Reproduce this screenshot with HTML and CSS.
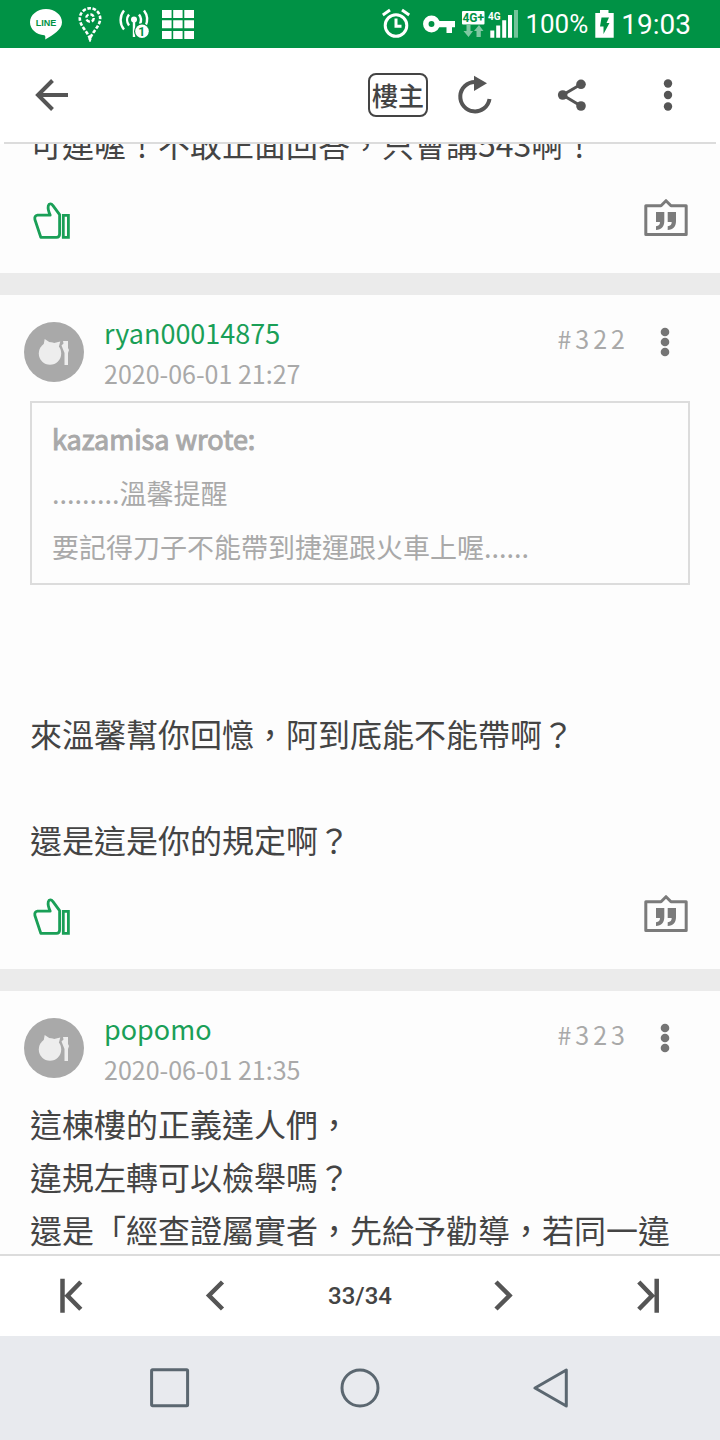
FILE: index.html
```html
<!DOCTYPE html>
<html lang="zh-Hant">
<head>
    <meta charset="UTF-8">
    <meta name="viewport" content="width=device-width, initial-scale=1.0">
    <title>33/34</title>
    <link rel="stylesheet" href="styles.css">
</head>
<body>
    <!-- Shared icons -->
    <svg class="sprite" aria-hidden="true">
        <symbol id="icon-like" viewBox="0 0 44 44">
            <g fill="none" stroke="#1a9f57" stroke-width="2.8" stroke-linejoin="round">
                <path d="M5.5 19.2H18.2C16.5 15.5 15.8 12 16.3 9.8C16.9 7.4 19.5 7.4 20.8 9.4L27.6 18.7V38Q27.6 41.3 24.5 41.3H8.8L2.9 23.5Q2.2 19.6 5.5 19.2Z"/>
                <path d="M31.3 19.3H36.4V41.3H31.3Z" stroke-linejoin="miter"/>
            </g>
        </symbol>
        <symbol id="icon-quote" viewBox="0 0 44 44">
            <path d="M1.8 9.7H17L22 4.7L27 9.7H42.2V38.5H1.8Z" fill="none" stroke="#7b7b7b" stroke-width="3" stroke-linejoin="round"/>
            <path d="M12 16H20.3V25C20.3 31 17.5 33.5 12 34V30.3C14.8 29.8 16 28.5 16 26H12ZM23.7 16H32V25C32 31 29.2 33.5 23.7 34V30.3C26.5 29.8 27.7 28.5 27.7 26H23.7Z" fill="#7b7b7b"/>
        </symbol>
        <symbol id="icon-avatar" viewBox="0 0 60 60">
            <circle cx="30" cy="30" r="30" fill="#a9a9a9"/>
            <g fill="#ededed">
                <circle cx="26" cy="31.5" r="11.2"/>
                <path d="M20.7 17L26 20.5L30 21L36.3 19.5L34.5 26L19 26Z"/>
                <path d="M39 19H44V26L45 28L44 31V43H40.5V31L39.3 28L37.5 23.5L39.5 21.5Z"/>
            </g>
        </symbol>
        <symbol id="icon-dots" viewBox="0 0 40 40">
            <circle cx="20" cy="10" r="4.3"/>
            <circle cx="20" cy="20" r="4.3"/>
            <circle cx="20" cy="30" r="4.3"/>
        </symbol>
    </svg>

    <div class="status-bar">
        <div class="status-left">
            <svg width="34" height="36" viewBox="0 0 34 36">
                <path d="M16 3C24.8 3 32 9 32 16.2C32 23.5 23 29 15.2 33.5C15.5 31.5 15.5 30 14.5 29.3C6 28.5 0 23 0 16.2C0 9 7.2 3 16 3Z" fill="#fff"/>
                <text x="16" y="20" class="line-text" text-anchor="middle">LINE</text>
            </svg>
            <svg width="26" height="36" viewBox="0 0 26 36" fill="none" stroke="#fff">
                <path d="M12 33C10 26 1.8 20 1.8 12.5A10.2 10.2 0 0 1 22.2 12.5C22.2 20 14 26 12 33Z" stroke-width="2.6" stroke-dasharray="3.6 1.6"/>
                <circle cx="12" cy="12" r="3.8" stroke-width="2.4" stroke-dasharray="4 1.97"/>
                <circle cx="12" cy="33" r="1.5" fill="#fff" stroke="none"/>
            </svg>
            <svg class="hotspot" width="30" height="36" viewBox="0 0 30 36">
                <g fill="none" stroke="#fff" stroke-width="2.4">
                    <path d="M6 4.5A15 15 0 0 0 6 23.500M11 8.500A9 9 0 0 0 11 19.500M21 8.500A9 9 0 0 1 22 18M26 4.500A15 15 0 0 1 27.500 20"/>
                    <path d="M16 14V31"/>
                </g>
                <circle cx="16" cy="13.5" r="3" fill="#fff"/>
                <circle cx="24" cy="25.3" r="8" fill="#009245"/>
                <circle cx="24" cy="25.3" r="6.8" fill="#fff"/>
                <text x="23.8" y="29.6" class="badge-text" text-anchor="middle">1</text>
            </svg>
            <svg width="32" height="36" viewBox="0 0 32 36" fill="#fff">
                <path d="M0 4H9.6V12H0ZM11.2 4H20.6V12H11.2ZM22.3 4H32V12H22.3ZM0 14.3H9.6V22.3H0ZM11.2 14.3H20.6V22.3H11.2ZM22.3 14.3H32V22.3H22.3ZM0 24.9H9.6V32.9H0ZM11.2 24.9H20.6V32.9H11.2ZM22.3 24.9H32V32.9H22.3Z"/>
            </svg>
        </div>
        <div class="status-right">
            <svg width="34" height="36" viewBox="0 0 34 36" fill="none" stroke="#fff" stroke-width="3">
                <circle cx="14" cy="19.5" r="10.8"/>
                <path d="M14 12.5V20.3H19.5"/>
                <path d="M.8 9L8 4M20 4L27.2 9"/>
            </svg>
            <svg width="32" height="36" viewBox="0 0 32 36">
                <circle cx="8.500" cy="18" r="5.7" fill="none" stroke="#fff" stroke-width="5.5"/>
                <path d="M14 15H32V21.2H29V27H23.5V21.2H14Z" fill="#fff"/>
            </svg>
            <svg width="56" height="36" viewBox="0 0 56 36" fill="#fff">
                <rect x="0" y="5" width="22.5" height="13.5" rx="1"/>
                <text x="11.2" y="16" class="net-text" text-anchor="middle">4G+</text>
                <path d="M4.5 19H8.5V25H11L6.5 31L1.5 25H4.500ZM14.500 31V25H12L17 19L21.500 25H18.800V31Z" opacity=".5"/>
                <text x="26" y="13.5" class="sig-text">4G</text>
                <path d="M28.3 24.5H32.3V31.7H28.3ZM34.2 19.5H38.2V31.7H34.2ZM40.2 14.2H44.2V31.7H40.2ZM46 9H50V31.7H46Z"/>
                <path d="M52 4H56V31.7H52Z" opacity=".45"/>
            </svg>
            <span class="battery-text">100%</span>
            <svg width="19" height="36" viewBox="0 0 19 36">
                <path d="M5 4H13.5V7H18.7V31.7H.3V7H5Z" fill="#fff"/>
                <path d="M6.5 11.5H14L11.5 17H14.5L8.5 28V20.5H5Z" fill="#009245"/>
            </svg>
            <span class="clock">19:03</span>
        </div>
    </div>

    <header class="toolbar">
        <button class="tool-btn back" aria-label="返回">
            <svg width="36" height="36" viewBox="0 0 36 36" fill="none" stroke="#555" stroke-width="4">
                <path d="M4 18H34M18.5 3.5L4 18L18.5 32.5"/>
            </svg>
        </button>
        <button class="owner-btn">樓主</button>
        <button class="tool-btn" aria-label="重新整理">
            <svg width="40" height="40" viewBox="0 0 40 40">
                <path d="M33.5 24A14.7 14.7 0 1 1 19 7" fill="none" stroke="#555" stroke-width="4"/>
                <path d="M18 .7L31 8.3L18 16Z" fill="#555"/>
            </svg>
        </button>
        <button class="tool-btn" aria-label="分享">
            <svg width="40" height="40" viewBox="0 0 40 40" fill="#555">
                <path d="M29 9.3L10.7 20L29 31" fill="none" stroke="#555" stroke-width="3"/>
                <circle cx="29" cy="9.3" r="4.8"/>
                <circle cx="10.7" cy="20" r="4.8"/>
                <circle cx="29" cy="31" r="4.8"/>
            </svg>
        </button>
        <button class="tool-btn" aria-label="更多">
            <svg width="40" height="40" viewBox="0 0 40 40" fill="#555">
                <circle cx="20" cy="8.5" r="4.2"/>
                <circle cx="20" cy="20" r="4.2"/>
                <circle cx="20" cy="31.5" r="4.2"/>
            </svg>
        </button>
    </header>

    <main class="feed">
        <div class="posts">
            <article class="post">
                <div class="post-body">可連喔！不敢正面回答，只會講543啊！</div>
                <div class="post-actions">
                    <button aria-label="讚"><svg width="44" height="44"><use href="#icon-like"/></svg></button>
                    <button aria-label="引言"><svg width="44" height="44"><use href="#icon-quote"/></svg></button>
                </div>
            </article>

            <article class="post">
                <div class="post-head">
                    <svg class="avatar" width="60" height="60"><use href="#icon-avatar"/></svg>
                    <div class="post-meta">
                        <a href="#" class="author">ryan00014875</a>
                        <div class="date">2020-06-01 21:27</div>
                    </div>
                    <span class="floor">#322</span>
                    <button class="post-menu" aria-label="更多"><svg width="40" height="40"><use href="#icon-dots"/></svg></button>
                </div>
                <div class="post-body with-head">
                    <blockquote class="quote">
                        <div class="quote-author">kazamisa wrote:</div>
                        .........溫馨提醒<br>
                        要記得刀子不能帶到捷運跟火車上喔......
                    </blockquote>
                    <br>
                    <br>
                    來溫馨幫你回憶，阿到底能不能帶啊？<br>
                    <br>
                    還是這是你的規定啊？
                </div>
                <div class="post-actions">
                    <button aria-label="讚"><svg width="44" height="44"><use href="#icon-like"/></svg></button>
                    <button aria-label="引言"><svg width="44" height="44"><use href="#icon-quote"/></svg></button>
                </div>
            </article>

            <article class="post">
                <div class="post-head">
                    <svg class="avatar" width="60" height="60"><use href="#icon-avatar"/></svg>
                    <div class="post-meta">
                        <a href="#" class="author">popomo</a>
                        <div class="date">2020-06-01 21:35</div>
                    </div>
                    <span class="floor">#323</span>
                    <button class="post-menu" aria-label="更多"><svg width="40" height="40"><use href="#icon-dots"/></svg></button>
                </div>
                <div class="post-body with-head">
                    這棟樓的正義達人們，<br>
                    違規左轉可以檢舉嗎？<br>
                    還是「經查證屬實者，先給予勸導，若同一違
                </div>
            </article>
        </div>
    </main>

    <nav class="pager">
        <button aria-label="第一頁">
            <svg width="36" height="36" viewBox="0 0 36 36" fill="none" stroke="#555" stroke-width="4.5">
                <path d="M8.5 .7V34.7M26.8 4L13.5 17.7L26.8 31.3"/>
            </svg>
        </button>
        <button aria-label="上一頁">
            <svg width="36" height="36" viewBox="0 0 36 36" fill="none" stroke="#555" stroke-width="4.5">
                <path d="M24.5 4L11 17.5L24.5 31"/>
            </svg>
        </button>
        <span class="page-number">33/34</span>
        <button aria-label="下一頁">
            <svg width="36" height="36" viewBox="0 0 36 36" fill="none" stroke="#555" stroke-width="4.5">
                <path d="M10 4L23.5 17.5L10 31"/>
            </svg>
        </button>
        <button aria-label="最後一頁">
            <svg width="36" height="36" viewBox="0 0 36 36" fill="none" stroke="#555" stroke-width="4.5">
                <path d="M26.7 .7V34.7M8.8 4L22 17.7L8.8 31.3"/>
            </svg>
        </button>
    </nav>

    <div class="system-nav">
        <button aria-label="最近使用">
            <svg width="40" height="40" viewBox="0 0 40 40"><rect x="1.6" y="1.8" width="36" height="36" rx="1"/></svg>
        </button>
        <button aria-label="主畫面">
            <svg width="40" height="40" viewBox="0 0 40 40"><circle cx="20" cy="20" r="18"/></svg>
        </button>
        <button aria-label="上一步">
            <svg width="40" height="40" viewBox="0 0 40 40"><path d="M36.3 2V38L5 20Z"/></svg>
        </button>
    </div>
</body>
</html>
```

FILE: styles.css
```css
* {
    box-sizing: border-box;
}

body {
    font-family: "Noto Sans CJK TC", sans-serif;
    background-color: #fff;
    color: #444;
    margin: 0;
    height: 100vh;
    display: flex;
    flex-direction: column;
}

button {
    display: flex;
    justify-content: center;
    align-items: center;
    margin: 0;
    padding: 0;
    border: none;
    background: none;
    color: inherit;
    font-family: inherit;
    cursor: pointer;
}

svg {
    display: block;
    flex-shrink: 0;
}

.sprite {
    position: absolute;
    width: 0;
    height: 0;
}

/* Status bar */
.status-bar {
    display: flex;
    justify-content: space-between;
    align-items: center;
    flex-shrink: 0;
    height: 48px;
    padding: 0 29px 0 30px;
    background-color: #009245;
    color: #fff;
    font-family: Roboto, sans-serif;
}

.status-left, .status-right {
    display: flex;
    align-items: center;
}

.status-left {
    gap: 14px;
}

.status-right {
    gap: 7px;
}

.hotspot {
    overflow: visible;
}

.battery-text {
    font-size: 26px;
}

.clock {
    font-size: 28px;
}

.line-text {
    font: bold 9px "Liberation Sans", sans-serif;
    fill: #009245;
}

.badge-text {
    font: bold 12px Roboto, sans-serif;
    fill: #009245;
}

.net-text {
    font: bold 12px Roboto, sans-serif;
    fill: #009245;
}

.sig-text {
    font: bold 10px Roboto, sans-serif;
}

/* Toolbar */
.toolbar {
    display: flex;
    align-items: center;
    flex-shrink: 0;
    height: 96px;
    margin: 0 4px;
    border-bottom: 2px solid #dcdcdc;
}

.tool-btn {
    width: 96px;
    height: 94px;
}

.back {
    margin-right: auto;
}

.owner-btn {
    width: 60px;
    height: 44px;
    border: 2px solid #444;
    border-radius: 8px;
    font-size: 26px;
    font-weight: 500;
    line-height: 40px;
}

/* Posts */
.feed {
    flex: 1;
    min-height: 0;
    overflow: hidden;
    background-color: #ebebeb;
}

/* scrolled a little, the first line sits under the toolbar */
.posts {
    display: flex;
    flex-direction: column;
    gap: 22px;
    margin-top: -27px;
}

.post {
    background-color: #fdfdfd;
}

.post-head {
    display: flex;
    align-items: center;
    padding: 15px 31px 0 24px;
}

.post-meta {
    flex: 1;
    margin-left: 20px;
    padding-top: 2px;
    line-height: 41px;
}

.author {
    display: block;
    color: #1a9f57;
    font-size: 27px;
    text-decoration: none;
}

.date {
    color: #a9a9a9;
    font-size: 25px;
}

.floor {
    align-self: flex-start;
    margin-right: 12px;
    color: #a9a9a9;
    font-size: 25px;
    line-height: 56px;
    letter-spacing: 4px;
}

.post-menu {
    align-self: flex-start;
    width: 48px;
    height: 64px;
    fill: #757575;
}

.post-body {
    padding: 0 30px;
    font-size: 32px;
    line-height: 53px;
    white-space: nowrap;
}

.with-head {
    padding-top: 7px;
}

.quote {
    margin: 0 0 16px;
    padding: 9px 20px;
    border: 2px solid #dcdcdc;
    color: #a9a9a9;
    font-size: 27px;
    line-height: 54px;
}

.quote-author {
    -webkit-text-stroke: 1px #a9a9a9;
}

.post-actions {
    display: flex;
    justify-content: space-between;
    padding: 26px 32px 33px;
}

/* Pager */
.pager {
    display: flex;
    align-items: center;
    flex-shrink: 0;
    height: 82px;
    border-top: 2px solid #dcdcdc;
    background-color: #fff;
}

.pager > * {
    flex: 1;
}

.page-number {
    font-family: Roboto, sans-serif;
    font-size: 24px;
    font-weight: 500;
    text-align: center;
}

/* Android navigation */
.system-nav {
    display: flex;
    justify-content: space-evenly;
    align-items: center;
    flex-shrink: 0;
    height: 104px;
    background-color: #e8eaee;
    fill: none;
    stroke: #5b6770;
    stroke-width: 3;
    stroke-linejoin: round;
}
```
